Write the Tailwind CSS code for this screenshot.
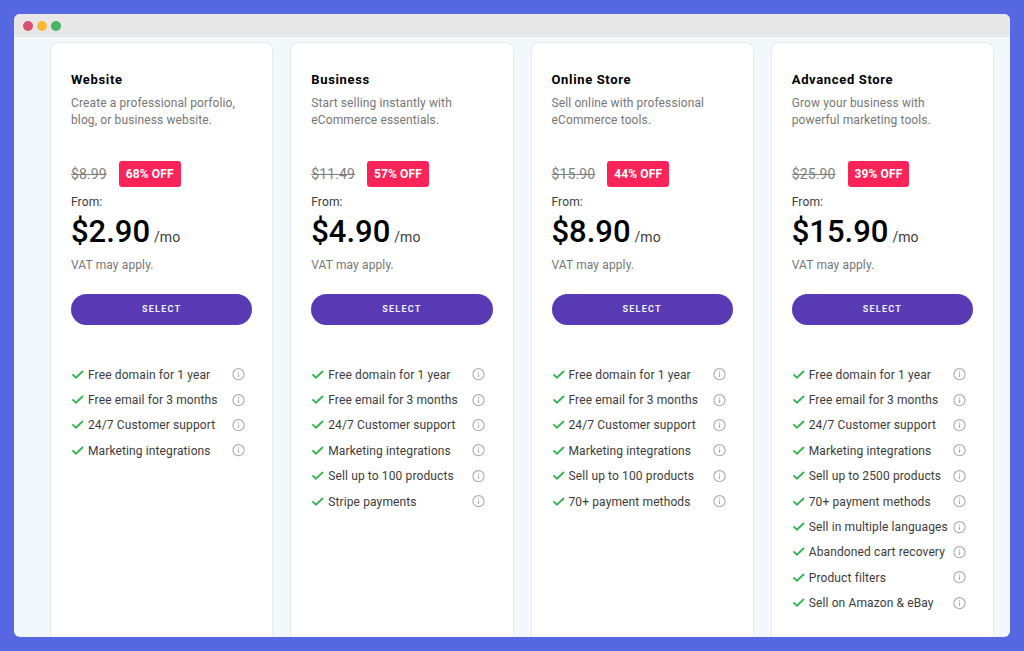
<!DOCTYPE html>
<html lang="en">
<head>
<meta charset="utf-8">
<meta name="viewport" content="width=device-width, initial-scale=1">
<title>Pricing plans</title>
<script src="https://cdn.jsdelivr.net/npm/@tailwindcss/browser@4"></script>
</head>
<body class="flex min-h-screen bg-[#5568e2] p-[14px] font-['Roboto',sans-serif] text-[12px] tracking-[0.01em] text-[#3c3c3c]">
<div class="flex flex-1 flex-col overflow-hidden rounded-md bg-[#f3f8fc]">
  <header class="flex h-[23px] shrink-0 items-center gap-[4px] bg-[#e7e7e7] pl-[9px]">
    <span class="size-[10px] rounded-full bg-[#d9506f]"></span>
    <span class="size-[10px] rounded-full bg-[#fbb836]"></span>
    <span class="size-[10px] rounded-full bg-[#46b35e]"></span>
  </header>
  <main id="plans" class="grid flex-1 grid-cols-4 gap-[17px] pl-[36px] pr-[16px] pt-[5px]"></main>
</div>
<script>
const plans = [
  { name: 'Website', text: 'Create a professional porfolio,<br>blog, or business website.', old: '$8.99', off: '68%', price: '$2.90',
    features: ['Free domain for 1 year', 'Free email for 3 months', '24/7 Customer support', 'Marketing integrations'] },
  { name: 'Business', text: 'Start selling instantly with<br>eCommerce essentials.', old: '$11.49', off: '57%', price: '$4.90',
    features: ['Free domain for 1 year', 'Free email for 3 months', '24/7 Customer support', 'Marketing integrations', 'Sell up to 100 products', 'Stripe payments'] },
  { name: 'Online Store', text: 'Sell online with professional<br>eCommerce tools.', old: '$15.90', off: '44%', price: '$8.90',
    features: ['Free domain for 1 year', 'Free email for 3 months', '24/7 Customer support', 'Marketing integrations', 'Sell up to 100 products', '70+ payment methods'] },
  { name: 'Advanced Store', text: 'Grow your business with<br>powerful marketing tools.', old: '$25.90', off: '39%', price: '$15.90',
    features: ['Free domain for 1 year', 'Free email for 3 months', '24/7 Customer support', 'Marketing integrations', 'Sell up to 2500 products', '70+ payment methods', 'Sell in multiple languages', 'Abandoned cart recovery', 'Product filters', 'Sell on Amazon &amp; eBay'] }
];

const feature = label => `
  <li class="flex items-center whitespace-nowrap">
    <svg class="mr-[4px] h-[10px] w-[13px] shrink-0" viewBox="0 0 13 10" fill="none" stroke="#35b550" stroke-width="1.9" aria-hidden="true"><path d="M1.5 4.4 4.9 7.6 12 1"/></svg>
    <span class="w-[144px]">${label}</span>
    <button type="button" aria-label="About: ${label}" class="shrink-0">
      <svg class="block size-[13px]" viewBox="0 0 13 13" fill="none" stroke="#adadad" aria-hidden="true"><circle cx="6.5" cy="6.2" r="5.6" stroke-width="1.1"/><path d="M6.5 5.5v3.6M6.5 3.3v1.2" stroke-width="1.1"/></svg>
    </button>
  </li>`;

document.getElementById('plans').innerHTML = plans.map(p => `
  <section class="rounded-t-lg border border-b-0 border-[#e6eaed] bg-white px-[20px] pt-[27px]">
    <h2 class="text-[13px] leading-[20px] font-bold tracking-wider text-black">${p.name}</h2>
    <p class="mt-[5px] leading-[17px] whitespace-nowrap text-[#777]">${p.text}</p>
    <div class="mt-[32px] flex items-center gap-[12px]">
      <s class="text-[14px] text-[#808080]">${p.old}</s>
      <span class="rounded-[3px] bg-[#fa2459] px-[7px] leading-[26px] font-bold text-white">${p.off} OFF</span>
    </div>
    <p class="mt-[6px] leading-[18px]">From:</p>
    <p class="mt-[1px] flex h-[40px] items-baseline gap-[4px] leading-[40px] whitespace-nowrap"><span class="text-[31px] font-medium tracking-normal text-black">${p.price}</span><span class="text-[14px] tracking-normal">/mo</span></p>
    <p class="mt-[5px] leading-[16px] text-[#777]">VAT may apply.</p>
    <button type="button" class="mt-[21px] h-[31px] w-full rounded-full bg-[#583ab5] text-[9px] font-bold tracking-[0.14em] text-[#f3eff8]">SELECT</button>
    <ul class="mt-[37px] grid h-[254px] grid-rows-10">${p.features.map(feature).join('')}</ul>
  </section>`).join('');
</script>
</body>
</html>
